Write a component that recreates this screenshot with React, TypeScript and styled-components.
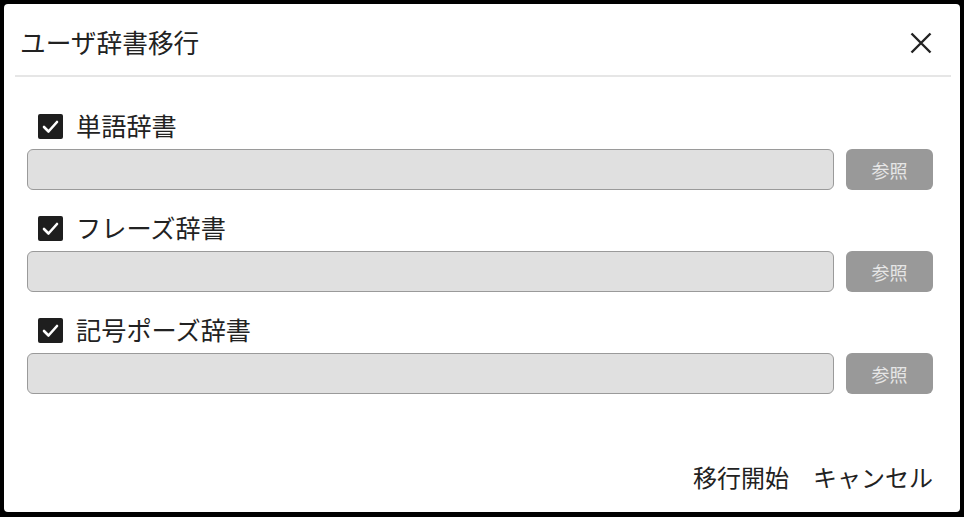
import React from "react";
import styled, { createGlobalStyle } from "styled-components";

const Global = createGlobalStyle`
  html, body { margin: 0; padding: 0; background: #000; }
  body { font-family: "Noto Sans CJK JP", "Noto Sans", sans-serif; }
  * { box-sizing: border-box; }
`;

const Frame = styled.div`
  width: 964px;
  height: 517px;
  padding: 4px 4px 5px 4px;
  background: #000;
`;

const Dialog = styled.div`
  width: 100%;
  height: 100%;
  background: #fff;
  border-radius: 4px;
  display: flex;
  flex-direction: column;
  color: #222;
`;

const Header = styled.div`
  height: 71px;
  padding: 4px 28px 0 16px;
  display: flex;
  align-items: center;
  justify-content: space-between;
`;

const Title = styled.h1`
  margin: 0;
  font-size: 25.7px;
  font-weight: 400;
  line-height: 1;
  color: #222;
`;

const CloseButton = styled.button`
  width: 22px;
  height: 22px;
  margin-top: 2px;
  padding: 0;
  border: none;
  background: none;
  display: flex;
  cursor: pointer;
`;

const Divider = styled.div`
  height: 2px;
  margin: 0 9px 0 11px;
  background: #e6e6e6;
`;

const Content = styled.div`
  flex: 1;
  padding: 31px 27px 0 23px;
  display: flex;
  flex-direction: column;
  gap: 20px;
`;

const Group = styled.div`
  display: flex;
  flex-direction: column;
  gap: 5px;
`;

const LabelRow = styled.label`
  height: 36px;
  padding-left: 11px;
  display: flex;
  align-items: center;
  gap: 13px;
  font-size: 25.2px;
  line-height: 1;
  color: #222;
`;

const Box = styled.span`
  width: 25px;
  height: 25px;
  border-radius: 2px;
  background: #1e1e1e;
  display: flex;
  align-items: center;
  justify-content: center;
`;

const InputRow = styled.div`
  display: flex;
  gap: 12px;
`;

const PathInput = styled.div`
  flex: 1;
  height: 41px;
  background: #e0e0e0;
  border: 1px solid #9a9a9a;
  border-radius: 6px;
`;

const BrowseButton = styled.button`
  width: 87px;
  height: 41px;
  border: none;
  border-radius: 6px;
  background: #999;
  color: #e6e6e6;
  font-family: inherit;
  font-size: 18px;
  padding: 0;
`;

const Footer = styled.div`
  height: 40px;
  margin-bottom: 15px;
  padding-right: 21px;
  display: flex;
  justify-content: flex-end;
  align-items: center;
  gap: 12px;
`;

const TextButton = styled.button`
  border: none;
  background: none;
  padding: 0 6px;
  height: 40px;
  font-family: inherit;
  font-size: 24px;
  color: #222;
  line-height: 1;
`;

const Check = () => (
  <Box>
    <svg width="19" height="19" viewBox="0 0 19 19">
      <path d="M3 10 L7.5 14.5 L16 5" fill="none" stroke="#fff" strokeWidth="2.6" strokeLinecap="round" strokeLinejoin="round" />
    </svg>
  </Box>
);

const items = ["単語辞書", "フレーズ辞書", "記号ポーズ辞書"];

export default function App() {
  return (
    <Frame>
      <Global />
      <Dialog>
        <Header>
          <Title>ユーザ辞書移行</Title>
          <CloseButton aria-label="close">
            <svg width="22" height="22" viewBox="0 0 22 22">
              <path d="M1.5 1.5 L20.5 20.5 M20.5 1.5 L1.5 20.5" stroke="#222" strokeWidth="2.4" fill="none" />
            </svg>
          </CloseButton>
        </Header>
        <Divider />
        <Content>
          {items.map((t) => (
            <Group key={t}>
              <LabelRow>
                <Check />
                {t}
              </LabelRow>
              <InputRow>
                <PathInput />
                <BrowseButton>参照</BrowseButton>
              </InputRow>
            </Group>
          ))}
        </Content>
        <Footer>
          <TextButton>移行開始</TextButton>
          <TextButton>キャンセル</TextButton>
        </Footer>
      </Dialog>
    </Frame>
  );
}
